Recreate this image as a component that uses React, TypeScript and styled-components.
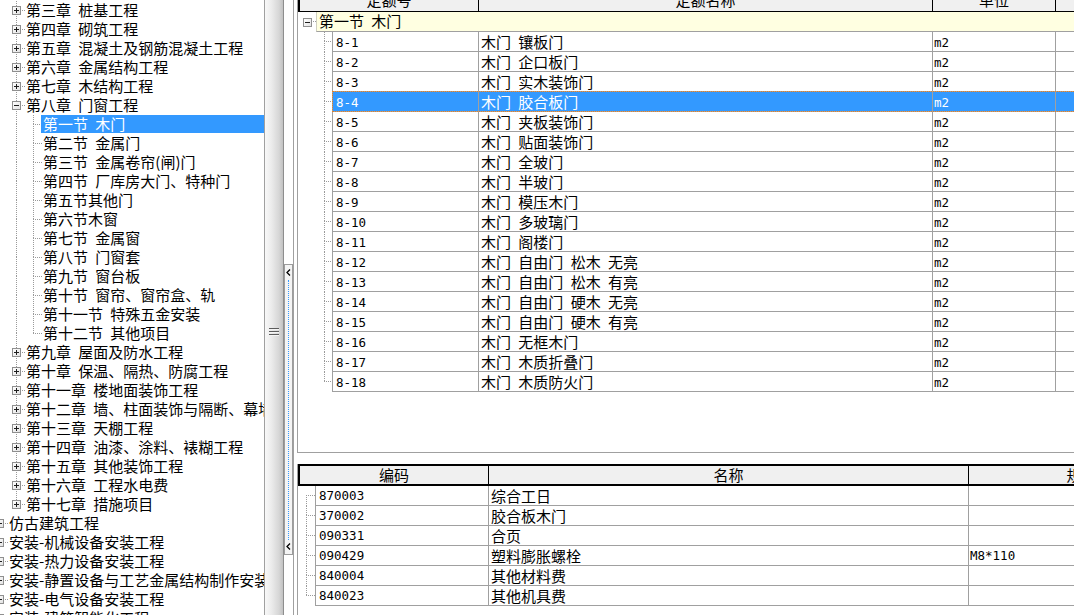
import React from 'react'
import styled, { createGlobalStyle } from 'styled-components'

const CJK = `"Noto Sans CJK SC", "Noto Sans", sans-serif`
const MONO = `"DejaVu Sans Mono", "Liberation Mono", "Noto Sans CJK SC", monospace`
const GRID = '#a0a0a0'
const DOT = '#9a9a9a'
const SELECT = '#3399ff'

const GlobalStyle = createGlobalStyle`
  html, body {
    margin: 0;
    padding: 0;
    background: #fff;
    overflow: hidden;
  }
  body {
    font-family: ${CJK};
    font-size: 15px;
    color: #000;
    word-spacing: 4px;
  }
`

interface TreeNode {
  level: number
  text: string
  box?: 'plus' | 'minus'
  selected?: boolean
}

const tree: TreeNode[] = [
  { level: 1, text: '第三章 桩基工程', box: 'plus' },
  { level: 1, text: '第四章 砌筑工程', box: 'plus' },
  { level: 1, text: '第五章 混凝土及钢筋混凝土工程', box: 'plus' },
  { level: 1, text: '第六章 金属结构工程', box: 'plus' },
  { level: 1, text: '第七章 木结构工程', box: 'plus' },
  { level: 1, text: '第八章 门窗工程', box: 'minus' },
  { level: 2, text: '第一节 木门', selected: true },
  { level: 2, text: '第二节 金属门' },
  { level: 2, text: '第三节 金属卷帘(闸)门' },
  { level: 2, text: '第四节 厂库房大门、特种门' },
  { level: 2, text: '第五节其他门' },
  { level: 2, text: '第六节木窗' },
  { level: 2, text: '第七节 金属窗' },
  { level: 2, text: '第八节 门窗套' },
  { level: 2, text: '第九节 窗台板' },
  { level: 2, text: '第十节 窗帘、窗帘盒、轨' },
  { level: 2, text: '第十一节 特殊五金安装' },
  { level: 2, text: '第十二节 其他项目' },
  { level: 1, text: '第九章 屋面及防水工程', box: 'plus' },
  { level: 1, text: '第十章 保温、隔热、防腐工程', box: 'plus' },
  { level: 1, text: '第十一章 楼地面装饰工程', box: 'plus' },
  { level: 1, text: '第十二章 墙、柱面装饰与隔断、幕墙工程', box: 'plus' },
  { level: 1, text: '第十三章 天棚工程', box: 'plus' },
  { level: 1, text: '第十四章 油漆、涂料、裱糊工程', box: 'plus' },
  { level: 1, text: '第十五章 其他装饰工程', box: 'plus' },
  { level: 1, text: '第十六章 工程水电费', box: 'plus' },
  { level: 1, text: '第十七章 措施项目', box: 'plus' },
  { level: 0, text: '仿古建筑工程', box: 'plus' },
  { level: 0, text: '安装-机械设备安装工程', box: 'plus' },
  { level: 0, text: '安装-热力设备安装工程', box: 'plus' },
  { level: 0, text: '安装-静置设备与工艺金属结构制作安装工程', box: 'plus' },
  { level: 0, text: '安装-电气设备安装工程', box: 'plus' },
  { level: 0, text: '安装-建筑智能化工程', box: 'plus' },
]

const quotas = [
  ['8-1', '木门 镶板门'],
  ['8-2', '木门 企口板门'],
  ['8-3', '木门 实木装饰门'],
  ['8-4', '木门 胶合板门'],
  ['8-5', '木门 夹板装饰门'],
  ['8-6', '木门 贴面装饰门'],
  ['8-7', '木门 全玻门'],
  ['8-8', '木门 半玻门'],
  ['8-9', '木门 模压木门'],
  ['8-10', '木门 多玻璃门'],
  ['8-11', '木门 阁楼门'],
  ['8-12', '木门 自由门 松木 无亮'],
  ['8-13', '木门 自由门 松木 有亮'],
  ['8-14', '木门 自由门 硬木 无亮'],
  ['8-15', '木门 自由门 硬木 有亮'],
  ['8-16', '木门 无框木门'],
  ['8-17', '木门 木质折叠门'],
  ['8-18', '木门 木质防火门'],
]

const materials = [
  ['870003', '综合工日', ''],
  ['370002', '胶合板木门', ''],
  ['090331', '合页', ''],
  ['090429', '塑料膨胀螺栓', 'M8*110'],
  ['840004', '其他材料费', ''],
  ['840023', '其他机具费', ''],
]

// dotted tree connectors, drawn as background layers
interface LaneProps {
  $w: number
  $x: number
  $h: number
  $up?: boolean
  $down?: boolean
  $branch?: boolean
}

const vDots = `repeating-linear-gradient(to bottom, ${DOT} 0 1px, transparent 1px 2px)`
const hDots = `repeating-linear-gradient(to right, ${DOT} 0 1px, transparent 1px 2px)`

const laneBackground = ({ $w, $x, $h, $up, $down, $branch }: LaneProps) => {
  const cy = Math.floor(($h - 1) / 2)
  const layers: string[] = []
  if ($up) layers.push(`${vDots} ${$x}px 0 / 1px ${cy}px no-repeat`)
  if ($down) layers.push(`${vDots} ${$x}px ${cy}px / 1px ${$h - cy}px no-repeat`)
  if ($branch) layers.push(`${hDots} ${$x}px ${cy}px / ${$w - $x}px 1px no-repeat`)
  return layers.length ? layers.join(', ') : 'none'
}

const Lane = styled.div<LaneProps>`
  flex: none;
  width: ${(p) => p.$w}px;
  height: ${(p) => p.$h}px;
  display: flex;
  align-items: center;
  background: ${laneBackground};
`

const ToggleBox = styled.span<{ $open?: boolean; $offset: number }>`
  box-sizing: border-box;
  width: 9px;
  height: 9px;
  margin-left: ${(p) => p.$offset}px;
  border: 1px solid #8f8f8f;
  background: linear-gradient(#1e1e1e, #1e1e1e) 1px 3px / 5px 1px no-repeat,
    ${(p) => (p.$open ? '' : 'linear-gradient(#1e1e1e, #1e1e1e) 3px 1px / 1px 5px no-repeat,')}
    linear-gradient(135deg, #ffffff, #e2e2e2);
`

const Root = styled.div`
  display: flex;
  width: 1074px;
  height: 615px;
  overflow: hidden;
  background: #fff;
`

const TreePane = styled.div`
  flex: none;
  width: 265px;
  box-sizing: border-box;
  border-right: 1px solid ${GRID};
  padding-top: 1px;
  overflow: hidden;
`

const TreeScroll = styled.div`
  margin-left: -9px;
`

const TreeRow = styled.div`
  display: flex;
  height: 19px;
  white-space: nowrap;
`

const NodeLabel = styled.span<{ $selected?: boolean }>`
  flex: 1;
  height: 18px;
  line-height: 18px;
  margin-left: -1px;
  padding-left: 2px;
  background: ${(p) => (p.$selected ? SELECT : 'transparent')};
  color: ${(p) => (p.$selected ? '#fff' : '#000')};
`

const Splitter = styled.div`
  flex: none;
  width: 19px;
  box-sizing: border-box;
  border-right: 1px solid #8e8e8e;
  background: linear-gradient(to right, #f8f8f8 0%, #ececec 35%, #d6d6d6 78%, #c2c2c2 100%);
  display: flex;
  flex-direction: column;
  align-items: center;
  padding-top: 328px;
`

const CollapseStrip = styled.div`
  flex: none;
  width: 10px;
  margin-right: 3px;
  box-sizing: border-box;
  border-right: 1px solid ${GRID};
  padding-top: 264px;
`

const CollapseButton = styled.div`
  height: 291px;
  box-sizing: border-box;
  border: 1px solid #9c9c9c;
  background: #f4f4f4;
  display: flex;
  flex-direction: column;
  align-items: center;
  padding: 4px 0 4px;
`

const DottedRail = styled.div`
  flex: 1;
  width: 0;
  margin: 4px 0 3px;
  border-left: 1px dotted ${SELECT};
`

const Main = styled.div`
  flex: 1;
  min-width: 0;
  display: flex;
  flex-direction: column;
`

const TopPanel = styled.div`
  flex: none;
  height: 453px;
  box-sizing: border-box;
  border-left: 1px solid ${GRID};
  border-bottom: 1px solid ${GRID};
  overflow: hidden;
`

const HeaderBar = styled.div<{ $cols: string; $boxed?: boolean }>`
  display: grid;
  grid-template-columns: ${(p) => p.$cols};
  box-sizing: border-box;
  background: #f0f0f0;
  border-left: 2px solid #000;
  border-bottom: ${(p) => (p.$boxed ? 2 : 1)}px solid #000;
  border-top: ${(p) => (p.$boxed ? '2px solid #000' : 'none')};
  height: ${(p) => (p.$boxed ? 22 : 23)}px;
  margin-top: ${(p) => (p.$boxed ? 0 : -11)}px;
  white-space: nowrap;
`

const HeaderCell = styled.div<{ $boxed?: boolean }>`
  border-right: 1px solid #000;
  text-align: center;
  line-height: ${(p) => (p.$boxed ? 18 : 22)}px;
  overflow: hidden;
`

const GroupRow = styled.div`
  display: flex;
  height: 20px;
`

const GroupBand = styled.div`
  flex: 1;
  box-sizing: border-box;
  border-left: 1px solid #d0d0c0;
  border-bottom: 1px solid ${GRID};
  background: #ffffe1;
  padding-left: 2px;
  line-height: 17px;
  white-space: nowrap;
`

const DataRow = styled.div`
  display: flex;
  height: 20px;
`

const Cells = styled.div<{ $cols: string; $selected?: boolean }>`
  position: relative;
  display: grid;
  grid-template-columns: ${(p) => p.$cols};
  background: ${(p) => (p.$selected ? SELECT : 'transparent')};
  color: ${(p) => (p.$selected ? '#fff' : '#000')};
  &::after {
    content: '';
    display: ${(p) => (p.$selected ? 'block' : 'none')};
    position: absolute;
    left: 0;
    right: 0;
    top: -1px;
    bottom: 0;
    border: 1px dotted #e0812a;
    pointer-events: none;
  }
`

const Cell = styled.div<{ $mono?: boolean; $first?: boolean; $pad: number; $top?: number }>`
  box-sizing: border-box;
  height: 20px;
  border-right: 1px solid ${GRID};
  border-bottom: 1px solid ${GRID};
  border-left: ${(p) => (p.$first ? `1px solid ${GRID}` : 'none')};
  padding-left: ${(p) => p.$pad}px;
  padding-top: ${(p) => p.$top ?? 0}px;
  line-height: ${(p) => 19 - (p.$top ?? 0)}px;
  font-family: ${(p) => (p.$mono ? MONO : CJK)};
  font-size: ${(p) => (p.$mono ? '12.5px' : '15px')};
  white-space: nowrap;
  overflow: hidden;
`

const BottomPanel = styled.div`
  flex: 1;
  margin-top: 11px;
  border-left: 1px solid ${GRID};
  overflow: hidden;
`

const Chevron = () => (
  <svg width="5" height="7" viewBox="0 0 5 7">
    <path d="M4 0.5 L1 3.5 L4 6.5" fill="none" stroke="#000" strokeWidth="1.3" />
  </svg>
)

const Grip = () => (
  <svg width="10" height="9" viewBox="0 0 10 9">
    <rect x="0" y="0" width="10" height="1" fill="#5c5c5c" />
    <rect x="0" y="3" width="10" height="1" fill="#5c5c5c" />
    <rect x="0" y="6" width="10" height="1" fill="#5c5c5c" />
    <rect x="0" y="1" width="10" height="1" fill="#f4f4f4" />
    <rect x="0" y="4" width="10" height="1" fill="#f4f4f4" />
    <rect x="0" y="7" width="10" height="1" fill="#f4f4f4" />
  </svg>
)

const hasNextAt = (i: number, level: number) => {
  for (let j = i + 1; j < tree.length; j++) {
    if (tree[j].level < level) return false
    if (tree[j].level === level) return true
  }
  return false
}

const TOP_COLS = '147px 454px 123px 200px'
const BOTTOM_COLS = '174px 480px 256px'

const App = () => (
  <Root>
    <GlobalStyle />
    <TreePane>
      <TreeScroll>
        {tree.map((node, i) => (
          <TreeRow key={i}>
            {Array.from({ length: node.level }).map((_, c) => {
              const pass = hasNextAt(i, c)
              return <Lane key={c} $w={17} $x={8} $h={19} $up={pass} $down={pass} />
            })}
            <Lane $w={17} $x={8} $h={19} $up $down={hasNextAt(i, node.level)} $branch>
              {node.box && <ToggleBox $offset={4} $open={node.box === 'minus'} />}
            </Lane>
            <NodeLabel $selected={node.selected}>{node.text}</NodeLabel>
          </TreeRow>
        ))}
      </TreeScroll>
    </TreePane>

    <Splitter>
      <Grip />
    </Splitter>

    <CollapseStrip>
      <CollapseButton>
        <Chevron />
        <DottedRail />
        <Chevron />
      </CollapseButton>
    </CollapseStrip>

    <Main>
      <TopPanel>
        <HeaderBar $cols="179px 454px 123px 200px">
          <HeaderCell>定额号</HeaderCell>
          <HeaderCell>定额名称</HeaderCell>
          <HeaderCell>单位</HeaderCell>
          <HeaderCell />
        </HeaderBar>
        <GroupRow>
          <Lane $w={18} $x={9} $h={20} $branch>
            <ToggleBox $offset={5} $open />
          </Lane>
          <GroupBand>第一节 木门</GroupBand>
        </GroupRow>
        {quotas.map(([code, name], i) => (
          <DataRow key={code}>
            <Lane $w={34} $x={26} $h={20} $up $down={i < quotas.length - 1} $branch />
            <Cells $cols={TOP_COLS} $selected={code === '8-4'}>
              <Cell $mono $first $pad={3} $top={3}>
                {code}
              </Cell>
              <Cell $pad={2} $top={1}>
                {name}
              </Cell>
              <Cell $mono $pad={1} $top={3}>
                m2
              </Cell>
              <Cell $pad={1} $top={1} />
            </Cells>
          </DataRow>
        ))}
      </TopPanel>

      <BottomPanel>
        <HeaderBar $cols="189px 480px 256px" $boxed>
          <HeaderCell $boxed>编码</HeaderCell>
          <HeaderCell $boxed>名称</HeaderCell>
          <HeaderCell $boxed>规格型号</HeaderCell>
        </HeaderBar>
        {materials.map(([code, name, spec], i) => (
          <DataRow key={code}>
            <Lane $w={17} $x={8} $h={20} $up={i > 0} $down={i < materials.length - 1} $branch />
            <Cells $cols={BOTTOM_COLS}>
              <Cell $mono $first $pad={3} $top={1}>
                {code}
              </Cell>
              <Cell $pad={2}>{name}</Cell>
              <Cell $mono $pad={1} $top={1}>
                {spec}
              </Cell>
            </Cells>
          </DataRow>
        ))}
      </BottomPanel>
    </Main>
  </Root>
)

export default App
